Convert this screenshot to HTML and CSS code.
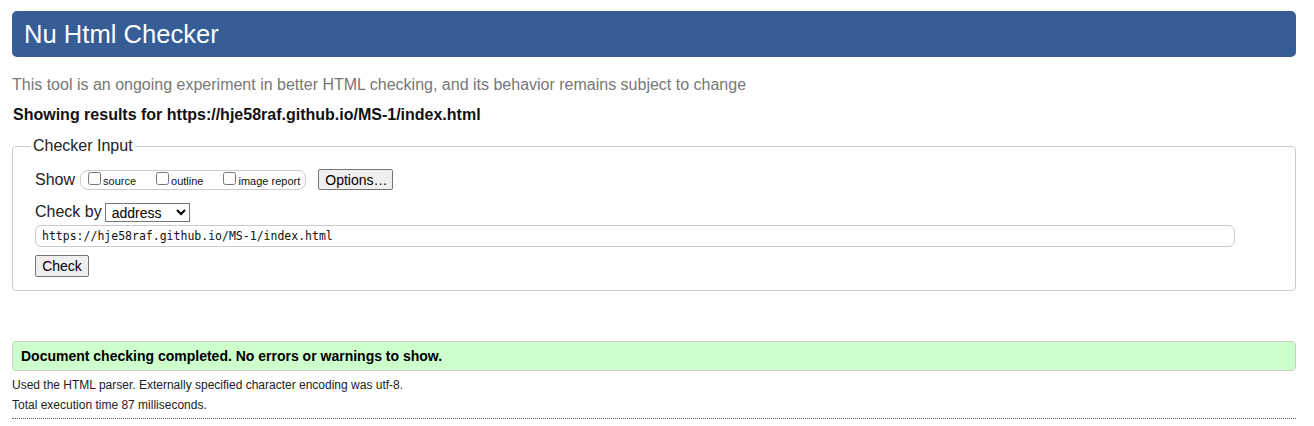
FILE: index.html
```html
<!DOCTYPE html>
<html lang="en">
<head>
<meta charset="utf-8">
<title>Nu Html Checker</title>
<link rel="stylesheet" href="styles.css">
</head>
<body>
<h1 class="title">Nu Html Checker</h1>
<p class="intro">This tool is an ongoing experiment in better HTML checking, and its behavior remains subject to change</p>
<p class="results-for">Showing results for https://hje58raf.github.io/MS-1/index.html</p>
<form class="checker">
  <fieldset class="fs">
    <legend class="legend">Checker Input</legend>
    <div class="inner">
      <div class="row show-row">
        <span class="label">Show</span>
        <span class="opts">
          <label class="opt"><input type="checkbox" class="cb">source</label>
          <label class="opt"><input type="checkbox" class="cb">outline</label>
          <label class="opt"><input type="checkbox" class="cb">image report</label>
        </span>
        <button type="button" class="btn options">Options…</button>
      </div>
      <div class="row by-row">
        <span class="label">Check by</span>
        <select class="sel"><option>address</option></select>
      </div>
      <input class="url" type="text" value="https://hje58raf.github.io/MS-1/index.html">
      <button type="button" class="btn check">Check</button>
    </div>
  </fieldset>
</form>
<p class="success">Document checking completed. No errors or warnings to show.</p>
<p class="details first">Used the HTML parser. Externally specified character encoding was utf-8.</p>
<p class="details">Total execution time 87 milliseconds.</p>
<hr class="rule">
</body>
</html>
```
FILE: styles.css
```css
html, body {
  margin: 0;
  background: #fff;
}
body {
  padding: 11px 18px 0 12px;
  font-family: "Liberation Sans", Arial, sans-serif;
  color: #000;
}
.title {
  margin: 0;
  height: 46px;
  line-height: 46px;
  padding-left: 12px;
  background: #365d95;
  color: #fff;
  font-size: 25.6px;
  font-weight: normal;
  border-radius: 5px;
}
.intro {
  margin: 19px 0 0;
  font-size: 16px;
  line-height: 18px;
  color: #777;
}
.results-for {
  margin: 12px 0 0 1px;
  font-size: 16px;
  line-height: 18px;
  font-weight: bold;
  color: #111;
}
.checker {
  margin: 13px 0 0;
}
.fs {
  margin: 0;
  padding: 0 18px 13px 18px;
  border: 1px solid #ccc;
  border-radius: 4px;
}
.legend {
  padding: 0 2px;
  font-size: 16px;
  line-height: 18px;
  color: #222;
}
.inner {
  padding-left: 4px;
  padding-top: 14px;
}
.row {
  display: flex;
  align-items: center;
}
.label {
  font-size: 16px;
  color: #222;
}
.show-row {
  height: 21px;
}
.opts {
  display: flex;
  align-items: center;
  gap: 19px;
  margin-left: 5px;
  height: 18px;
  padding: 0 5px 0 6px;
  border: 1px solid #ccc;
  border-radius: 8px;
}
.opt {
  display: flex;
  align-items: center;
  font-size: 11px;
  color: #111;
  padding-top: 2px;
}
.cb {
  margin: 0 2px 0 1px;
  width: 13px;
  height: 13px;
  position: relative;
  top: -2px;
}
.btn {
  font-family: "Liberation Sans", Arial, sans-serif;
  font-size: 14px;
  color: #000;
  background: #efefef;
  border: 1px solid #767676;
  border-radius: 2px;
  height: 21px;
  padding: 0 6px;
  margin: 0;
}
.options {
  margin-left: 12px;
  width: 75px;
}
.by-row {
  margin-top: 12px;
  height: 20px;
}
.sel {
  margin-left: 3px;
  width: 85px;
  height: 19px;
  font-family: "Liberation Sans", Arial, sans-serif;
  font-size: 14px;
  padding: 0 0 0 2px;
  border: 1px solid #767676;
  border-radius: 0;
  background: #fff;
  color: #000;
}
.url {
  display: block;
  box-sizing: border-box;
  margin-top: 3px;
  width: 1200px;
  height: 22px;
  padding: 0 6px;
  border: 1px solid #ccc;
  border-radius: 6px;
  font-family: "DejaVu Sans Mono", "Liberation Mono", monospace;
  font-size: 11.5px;
  color: #111;
  outline: none;
}
.check {
  display: block;
  margin-top: 8px;
  width: 54px;
  height: 22px;
}
.success {
  margin: 50px 0 0;
  height: 28px;
  line-height: 28px;
  padding-left: 8px;
  background: #ccffcc;
  border: 1px solid #ccc;
  border-radius: 4px;
  font-size: 14px;
  font-weight: bold;
  color: #000;
}
.details {
  margin: 5px 0 0;
  font-size: 12px;
  line-height: 15px;
  color: #222;
}
.details.first {
  margin-top: 7px;
}
.rule {
  margin: 5px 0 0;
  border: 0;
  border-top: 1px dotted #555;
  height: 0;
}
```
